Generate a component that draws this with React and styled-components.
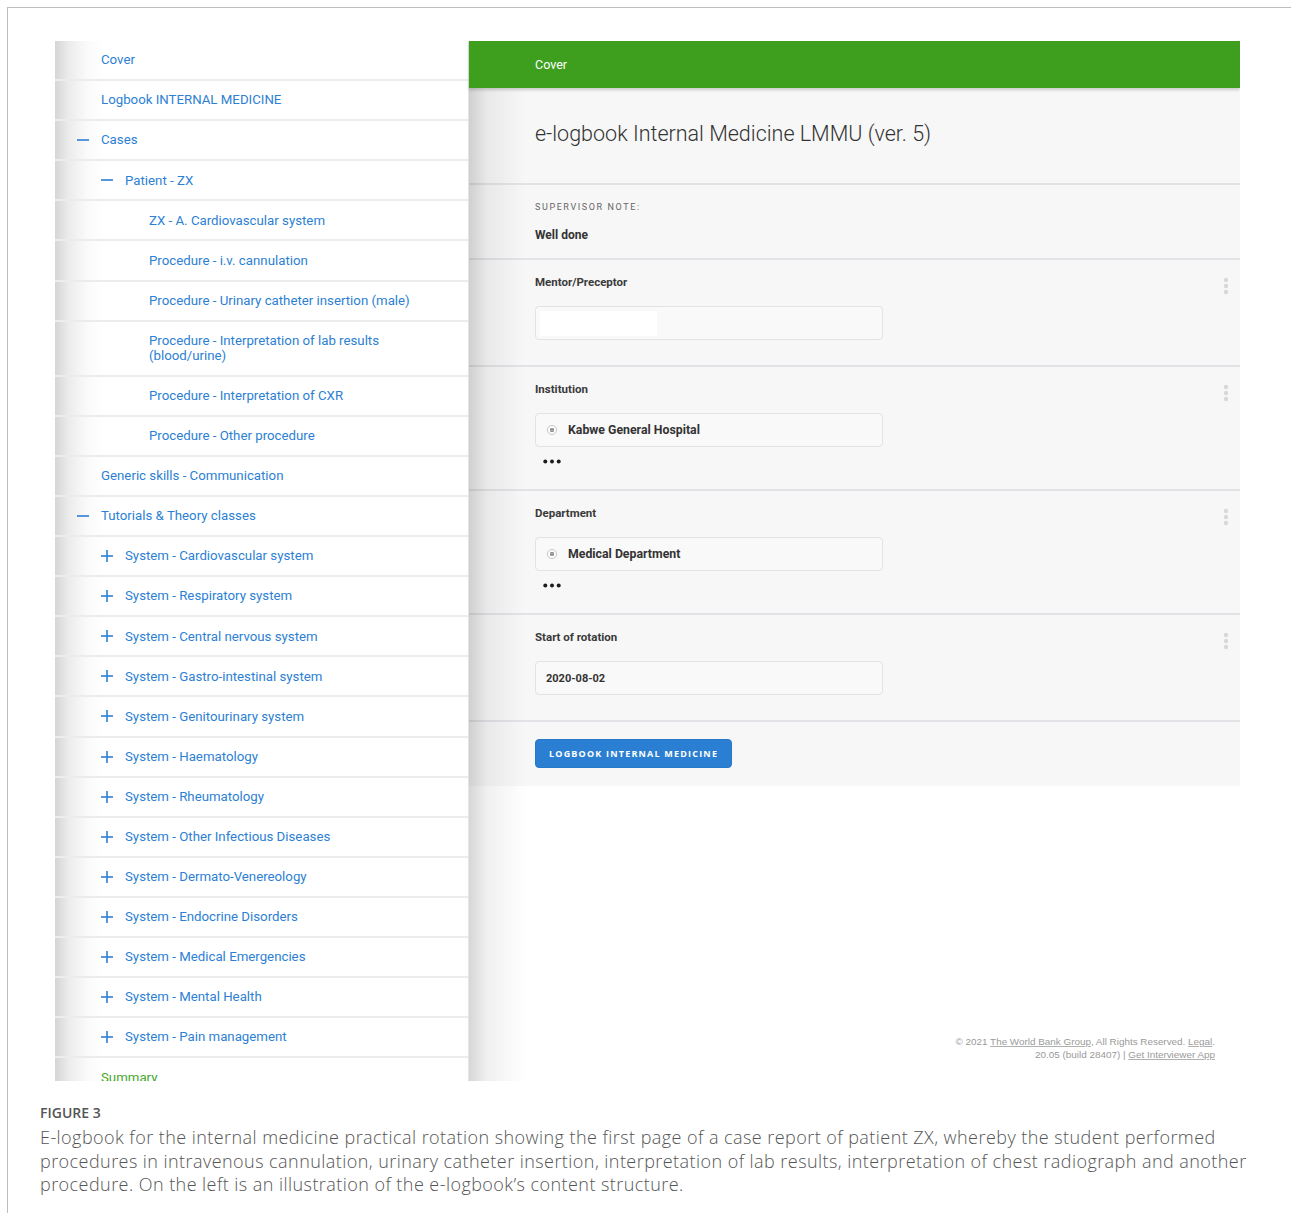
import styled, { createGlobalStyle } from "styled-components";

const GlobalStyle = createGlobalStyle`
  body {
    margin: 0;
    background: #fff;
    font-family: Roboto, "Liberation Sans", sans-serif;
  }
`;

const nav = [
  { label: "Cover", level: 0 },
  { label: "Logbook INTERNAL MEDICINE", level: 0 },
  { label: "Cases", level: 0, toggle: "minus" },
  { label: "Patient - ZX", level: 1, toggle: "minus" },
  { label: "ZX - A. Cardiovascular system", level: 2 },
  { label: "Procedure - i.v. cannulation", level: 2 },
  { label: "Procedure - Urinary catheter insertion (male)", level: 2 },
  { label: "Procedure - Interpretation of lab results (blood/urine)", level: 2 },
  { label: "Procedure - Interpretation of CXR", level: 2 },
  { label: "Procedure - Other procedure", level: 2 },
  { label: "Generic skills - Communication", level: 0 },
  { label: "Tutorials & Theory classes", level: 0, toggle: "minus" },
  { label: "System - Cardiovascular system", level: 1, toggle: "plus" },
  { label: "System - Respiratory system", level: 1, toggle: "plus" },
  { label: "System - Central nervous system", level: 1, toggle: "plus" },
  { label: "System - Gastro-intestinal system", level: 1, toggle: "plus" },
  { label: "System - Genitourinary system", level: 1, toggle: "plus" },
  { label: "System - Haematology", level: 1, toggle: "plus" },
  { label: "System - Rheumatology", level: 1, toggle: "plus" },
  { label: "System - Other Infectious Diseases", level: 1, toggle: "plus" },
  { label: "System - Dermato-Venereology", level: 1, toggle: "plus" },
  { label: "System - Endocrine Disorders", level: 1, toggle: "plus" },
  { label: "System - Medical Emergencies", level: 1, toggle: "plus" },
  { label: "System - Mental Health", level: 1, toggle: "plus" },
  { label: "System - Pain management", level: 1, toggle: "plus" },
  { label: "Summary", level: 0, done: true },
];

function ToggleIcon({ type }) {
  return (
    <Toggle viewBox="0 0 12 12">
      <path d="M0 6h12" stroke="currentColor" strokeWidth="1.6" />
      {type === "plus" && <path d="M6 0v12" stroke="currentColor" strokeWidth="1.6" />}
    </Toggle>
  );
}

function Kebab() {
  return (
    <KebabIcon viewBox="0 0 6 18">
      <circle cx="3" cy="3" r="2.2" />
      <circle cx="3" cy="9" r="2.2" />
      <circle cx="3" cy="15" r="2.2" />
    </KebabIcon>
  );
}

// collapsed list of further options under a single-choice question
function MoreDots() {
  return (
    <More viewBox="0 0 18 5">
      <circle cx="2.3" cy="2.5" r="2" />
      <circle cx="9" cy="2.5" r="2" />
      <circle cx="15.7" cy="2.5" r="2" />
    </More>
  );
}

function Choice({ children }) {
  return (
    <Field>
      <Radio />
      <ChoiceText>{children}</ChoiceText>
    </Field>
  );
}

export default function App() {
  return (
    <>
      <GlobalStyle />
      <Frame>
        <Shot>
          <Sidebar>
            {nav.map((item) => (
              <NavRow key={item.label} $level={item.level} $toggle={!!item.toggle} $done={item.done}>
                {item.toggle && <ToggleIcon type={item.toggle} />}
                <span>{item.label}</span>
              </NavRow>
            ))}
          </Sidebar>

          <Main>
            <Header>Cover</Header>
            <Content>
              <TitleSection>
                <Title>e-logbook Internal Medicine LMMU (ver. 5)</Title>
              </TitleSection>

              <NoteSection>
                <NoteLabel>SUPERVISOR NOTE:</NoteLabel>
                <NoteText>Well done</NoteText>
              </NoteSection>

              <Question>
                <QuestionBody>
                  <Label>Mentor/Preceptor</Label>
                  <Field>
                    <Blank />
                  </Field>
                </QuestionBody>
                <Kebab />
              </Question>

              <Question>
                <QuestionBody>
                  <Label>Institution</Label>
                  <Choice>Kabwe General Hospital</Choice>
                  <MoreDots />
                </QuestionBody>
                <Kebab />
              </Question>

              <Question>
                <QuestionBody>
                  <Label>Department</Label>
                  <Choice>Medical Department</Choice>
                  <MoreDots />
                </QuestionBody>
                <Kebab />
              </Question>

              <Question>
                <QuestionBody>
                  <Label>Start of rotation</Label>
                  <Field>
                    <DateText>2020-08-02</DateText>
                  </Field>
                </QuestionBody>
                <Kebab />
              </Question>

              <ButtonSection>
                <NavButton>LOGBOOK INTERNAL MEDICINE</NavButton>
              </ButtonSection>
            </Content>

            <Footer>
              <div>
                © 2021 <u>The World Bank Group</u>, All Rights Reserved. <u>Legal</u>.
              </div>
              <div>
                20.05 (build 28407) | <u>Get Interviewer App</u>
              </div>
            </Footer>
          </Main>
        </Shot>

        <CaptionTitle>FIGURE 3</CaptionTitle>
        <Caption>
          E-logbook for the internal medicine practical rotation showing the first page of a case report of patient
          ZX, whereby the student performed procedures in intravenous cannulation, urinary catheter insertion,
          interpretation of lab results, interpretation of chest radiograph and another procedure. On the left is an
          illustration of the e-logbook’s content structure.
        </Caption>
      </Frame>
    </>
  );
}

/* STYLES */
const Frame = styled.div`
  margin: 7px 0 0 7px;
  padding: 33px 0 30px 32px;
  border-top: 1px solid #bdbdbd;
  border-left: 1px solid #bdbdbd;
  min-height: 1170px;
  box-sizing: border-box;
`;

const Shot = styled.div`
  display: flex;
  width: 1185px;
  height: 1040px;
  margin-left: 15px;
  overflow: hidden;
`;

const Sidebar = styled.div`
  width: 413px;
  flex-shrink: 0;
  border-right: 1px solid #e4e4e4;
  background: linear-gradient(to right, #d5d5d5 0, #ececec 14px, #fafafa 32px, #fff 48px);
`;

const NavRow = styled.div`
  display: flex;
  align-items: center;
  min-height: 40.1px;
  box-sizing: border-box;
  padding: 11px 30px 11px ${(p) => 46 + p.$level * 24 - (p.$toggle ? 24 : 0)}px;
  border-bottom: 2px solid #ececec;
  font-size: 13.25px;
  line-height: 15.5px;
  color: ${(p) => (p.$done ? "#45a82c" : "#2d7fd4")};
`;

const Toggle = styled.svg`
  width: 12px;
  height: 12px;
  flex-shrink: 0;
  margin-right: 12px;
  color: #2d7fd4;
`;

const Main = styled.div`
  position: relative;
  flex: 1;
  display: flex;
  flex-direction: column;
  background: #fff;

  &::after {
    content: "";
    position: absolute;
    top: 0;
    bottom: 0;
    left: 0;
    width: 56px;
    background: linear-gradient(to right, rgba(0, 0, 0, 0.16), rgba(0, 0, 0, 0.06) 18px, rgba(0, 0, 0, 0));
    pointer-events: none;
  }
`;

const Header = styled.div`
  height: 47px;
  flex-shrink: 0;
  display: flex;
  align-items: center;
  padding-left: 66px;
  background: #3e9f1f;
  color: #fff;
  font-size: 12.5px;
  box-shadow: 0 2px 3px rgba(0, 0, 0, 0.18);
  position: relative;
  z-index: 1;
`;

const Content = styled.div`
  background: #f7f7f7;
`;

const TitleSection = styled.div`
  padding: 29px 0 33px 66px;
  border-bottom: 2px solid #e3e3e7;
`;

const Title = styled.h1`
  margin: 0;
  font-size: 21.5px;
  line-height: 33px;
  font-weight: 300;
  color: #333;
`;

const NoteSection = styled.div`
  padding: 15px 0 15px 66px;
  border-bottom: 2px solid #e3e3e7;
`;

const NoteLabel = styled.div`
  font-size: 9px;
  line-height: 14px;
  letter-spacing: 1.6px;
  color: #666;
`;

const NoteText = styled.div`
  margin-top: 14px;
  font-size: 12px;
  line-height: 15px;
  font-weight: 700;
  color: #333;
`;

const Question = styled.div`
  display: flex;
  align-items: flex-start;
  padding: 15px 11px 25px 66px;
  border-bottom: 2px solid #e3e3e7;
`;

const QuestionBody = styled.div`
  flex: 1;
`;

const Label = styled.div`
  font-size: 11.5px;
  line-height: 15px;
  font-weight: 700;
  color: #3a3a3a;
  margin-bottom: 16px;
`;

const Field = styled.div`
  width: 348px;
  height: 34px;
  box-sizing: border-box;
  display: flex;
  align-items: center;
  padding: 0 4px;
  border: 1px solid #e3e3e3;
  border-radius: 4px;
  background: #f9f9f9;
`;

const Blank = styled.div`
  width: 117px;
  height: 25px;
  background: #fff;
`;

const Radio = styled.span`
  width: 10px;
  height: 10px;
  box-sizing: border-box;
  margin: 0 11px 0 7px;
  border: 1px solid #c4c4c4;
  border-radius: 50%;
  background: radial-gradient(circle, #9a9a9a 0 2px, #fff 2.5px);
`;

const ChoiceText = styled.span`
  font-size: 12.3px;
  font-weight: 700;
  color: #333;
`;

const DateText = styled.span`
  margin-left: 6px;
  font-size: 11px;
  font-weight: 700;
  color: #333;
`;

const More = styled.svg`
  display: block;
  width: 18px;
  height: 5px;
  margin: 12px 0 0 8px;
  fill: #1e1e1e;
`;

const KebabIcon = styled.svg`
  width: 6px;
  height: 18px;
  margin-top: 2px;
  fill: #d8d8da;
`;

const ButtonSection = styled.div`
  padding: 17px 0 18px 66px;
`;

const NavButton = styled.button`
  height: 29px;
  padding: 0 13px;
  border: 1px solid #2878c8;
  border-radius: 4px;
  background: #2b7fd2;
  color: #fff;
  font-family: "Open Sans", Roboto, sans-serif;
  font-size: 9px;
  font-weight: 700;
  letter-spacing: 1.2px;
`;

const Footer = styled.div`
  flex: 1;
  display: flex;
  flex-direction: column;
  justify-content: flex-end;
  align-items: flex-end;
  padding: 0 25px 20px 0;
  font-family: "Liberation Sans", Arial, sans-serif;
  font-size: 9.9px;
  line-height: 13px;
  color: #9a9a9a;

  u {
    text-decoration-color: #b0b0b0;
  }
`;

const CaptionTitle = styled.div`
  margin-top: 22px;
  font-family: "Open Sans", Lato, sans-serif;
  font-size: 14px;
  font-weight: 600;
  color: #555;
`;

const Caption = styled.p`
  width: 1215px;
  margin: 4px 0 0;
  font-family: "Open Sans", Lato, sans-serif;
  font-size: 18px;
  line-height: 23.5px;
  font-weight: 300;
  letter-spacing: 0.44px;
  color: #555;
`;
